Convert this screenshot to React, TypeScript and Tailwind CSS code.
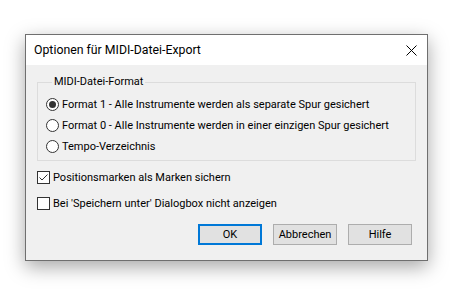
import React from 'react';

const font = { fontFamily: 'Roboto, "Noto Sans", sans-serif' };

const Radio: React.FC<{ checked?: boolean; label: string }> = ({ checked, label }) => (
  <label className="flex items-center h-[21px] gap-[3px] whitespace-nowrap">
    <span className="w-[13px] h-[13px] rounded-full border border-[#333333] bg-white flex items-center justify-center">
      {checked && <span className="w-[7px] h-[7px] rounded-full bg-[#333333]" />}
    </span>
    <span>{label}</span>
  </label>
);

const Check: React.FC<{ checked?: boolean; label: string }> = ({ checked, label }) => (
  <label className="flex items-center h-[26px] gap-[3px] whitespace-nowrap">
    <span className="w-[13px] h-[13px] border border-[#333333] bg-white flex items-center justify-center">
      {checked && (
        <svg width="11" height="11" viewBox="0 0 11 11">
          <path d="M1.5 5.5 L4 8 L9.5 2.5" fill="none" stroke="#333333" strokeWidth="1" />
        </svg>
      )}
    </span>
    <span>{label}</span>
  </label>
);

const Button: React.FC<{ label: string; primary?: boolean }> = ({ label, primary }) => (
  <button
    className={
      primary
        ? 'w-[64px] h-[21px] bg-[#e1e1e1] border-2 border-[#0078d7] flex items-center justify-center'
        : 'w-[64px] h-[21px] bg-[#e1e1e1] border border-[#adadad] flex items-center justify-center'
    }
  >
    {label}
  </button>
);

export default function App() {
  return (
    <div className="w-[470px] h-[301px] bg-white pt-[34px] pl-[25px] text-[11px] text-black leading-none" style={font}>
      <div className="w-[403px] h-[227px] border border-[#6f6f6f] bg-[#f0f0f0] flex flex-col shadow-[0_6px_18px_rgba(0,0,0,0.35)]">
        {/* Title bar */}
        <div className="h-[30px] bg-white flex items-center justify-between pl-[8px] pr-[10px]">
          <span className="text-[12.3px]">Optionen für MIDI-Datei-Export</span>
          <svg width="11" height="11" viewBox="0 0 11 11">
            <path d="M0.5 0.5 L10.5 10.5 M10.5 0.5 L0.5 10.5" stroke="#000" strokeWidth="1" />
          </svg>
        </div>

        <div className="px-[11px] pt-[9px]">
          <fieldset className="border border-[#dcdcdc] h-[87px] pl-[8px]">
            <legend className="ml-[6px] px-[2px] leading-[16px]">MIDI-Datei-Format</legend>
            <div className="flex flex-col mt-[4px]">
              <Radio checked label="Format 1 - Alle Instrumente werden als separate Spur gesichert" />
              <Radio label="Format 0 - Alle Instrumente werden in einer einzigen Spur gesichert" />
              <Radio label="Tempo-Verzeichnis" />
            </div>
          </fieldset>

          <div className="flex flex-col mt-[3px]">
            <Check checked label="Positionsmarken als Marken sichern" />
            <Check label="Bei 'Speichern unter' Dialogbox nicht anzeigen" />
          </div>

          <div className="flex justify-end gap-[11px] mt-[8px] pr-[4px]">
            <Button primary label="OK" />
            <Button label="Abbrechen" />
            <Button label="Hilfe" />
          </div>
        </div>
      </div>
    </div>
  );
}
